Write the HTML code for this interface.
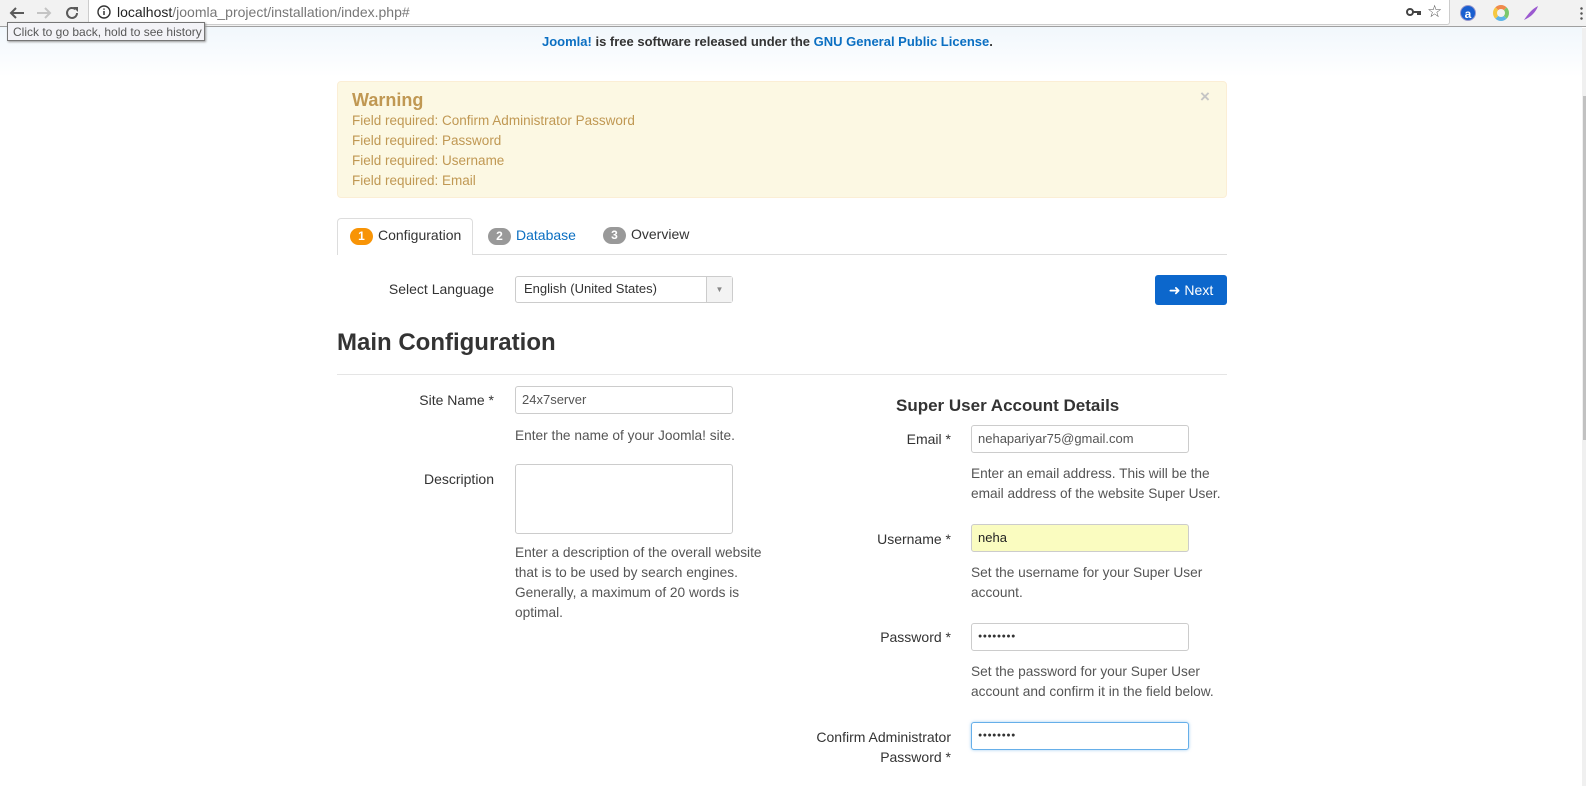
<!DOCTYPE html>
<html><head><style>
*{margin:0;padding:0;box-sizing:border-box}
body{width:1586px;height:786px;overflow:hidden;font-family:"Liberation Sans",Arial,sans-serif;font-size:13px;color:#333;background:#fff;position:relative}
.a{position:absolute;white-space:nowrap}
.bg{position:absolute;left:0;top:27px;width:1582px;height:50px;background:linear-gradient(#f1f7fc,#fff)}
.chrome{position:absolute;left:0;top:0;width:1586px;height:27px;background:#f2f2f2;border-bottom:1px solid #a0a0a0}
.url{position:absolute;left:88px;top:0;width:1362px;height:25px;background:#fff;border:1px solid #ccc;border-top:none;border-radius:0 0 3px 3px}
.tip{position:absolute;left:7px;top:22px;width:198px;height:19px;background:#f3f3f7;border:1px solid #767676;box-shadow:1px 1px 2px #999;font-size:12px;color:#575757;padding:2px 0 0 5px}
.warn{position:absolute;left:337px;top:81px;width:890px;height:117px;background:#fcf8e3;border:1px solid #fbeed5;border-radius:4px;color:#c09853}
.inp{position:absolute;background:#fff;border:1px solid #ccc;border-radius:3px;height:28px;padding:5px 6px;font-size:13px;color:#555}
.lbl{position:absolute;text-align:right;white-space:nowrap}
.help{position:absolute;line-height:20px;color:#555}
.badge{display:inline-block;width:23px;height:17px;border-radius:9px;color:#fff;font-weight:bold;font-size:12px;text-align:center;line-height:17px;vertical-align:middle;margin-right:5px}
.pw{font-size:7px;padding-top:9px;color:#333;letter-spacing:0.5px}
</style></head><body>
<div class="bg"></div>
<div class="chrome">
 <svg class="a" style="left:8px;top:5px" width="18" height="16"><path d="M16 8H3M8 3L3 8l5 5" stroke="#5a5a5a" stroke-width="2" fill="none"/></svg>
 <svg class="a" style="left:35px;top:5px" width="18" height="16"><path d="M2 8h13M10 3l5 5-5 5" stroke="#c4c4c4" stroke-width="2" fill="none"/></svg>
 <svg class="a" style="left:63px;top:4px" width="18" height="18"><path d="M14 9a5 5 0 1 1-1.6-3.7" stroke="#5a5a5a" stroke-width="2" fill="none"/><path d="M10 3h5v5z" fill="#5a5a5a"/></svg>
 <div class="url">
  <svg class="a" style="left:8px;top:5px" width="14" height="14"><circle cx="7" cy="7" r="6" stroke="#333" stroke-width="1.4" fill="none"/><path d="M7 6v4M7 3.5v1.2" stroke="#333" stroke-width="1.5"/></svg>
  <div class="a" style="left:28px;top:4px;font-size:14px;color:#222">localhost<span style="color:#777">/joomla_project/installation/index.php#</span></div>
  <svg class="a" style="left:1317px;top:7px" width="16" height="10"><circle cx="4" cy="5" r="3" stroke="#444" stroke-width="2" fill="none"/><path d="M7 5h8M12 5v3M14 5v3" stroke="#444" stroke-width="2"/></svg>
  <div class="a" style="left:1338px;top:2px;font-size:17px;color:#555">☆</div>
 </div>
 <div class="a" style="left:1460px;top:5px;width:16px;height:16px;border-radius:50%;background:#1a5fd0;color:#fff;font-weight:bold;font-size:12px;text-align:center;line-height:16px;border:1px solid #99c">a</div>
 <div class="a" style="left:1493px;top:5px;width:16px;height:16px;border-radius:50%;border:4px solid;border-color:#f08a4b #7bc86c #5db4e8 #f5c842"></div>
 <svg class="a" style="left:1522px;top:4px" width="18" height="18"><path d="M2 16C6 10 10 5 16 2 14 8 9 13 2 16z" fill="#9b59d0"/></svg>
 <div class="a" style="left:1580px;top:6px;width:3px;height:14px;background:radial-gradient(circle,#555 1px,transparent 1.5px) 0 0/3px 5px"></div>
</div>
<div class="tip">Click to go back, hold to see history</div>
<div class="a" style="left:1582px;top:28px;width:4px;height:758px;background:#f0f0f0"></div>
<div class="a" style="left:1583px;top:96px;width:3px;height:344px;background:#c1c1c1"></div>

<div class="a" style="left:542px;top:34px;font-weight:bold;font-size:13px"><span style="color:#0b6fc2">Joomla!</span> is free software released under the <span style="color:#0b6fc2">GNU General Public License</span>.</div>

<div class="warn">
 <div class="a" style="left:14px;top:8px;font-size:18px;font-weight:bold">Warning</div>
 <div class="a" style="left:14px;top:29px;line-height:20px;font-size:13.5px">Field required: Confirm Administrator Password<br>Field required: Password<br>Field required: Username<br>Field required: Email</div>
 <div class="a" style="left:862px;top:5px;font-size:17px;font-weight:bold;color:#c5c5c5">×</div>
</div>

<div class="a" style="left:337px;top:254px;width:890px;height:1px;background:#ddd"></div>
<div class="a" style="left:337px;top:218px;width:136px;height:37px;background:#fff;border:1px solid #ddd;border-bottom:none;border-radius:4px 4px 0 0"></div>
<div class="a" style="left:350px;top:227px;font-size:14px"><span class="badge" style="background:#f89406">1</span>Configuration</div>
<div class="a" style="left:488px;top:227px;font-size:14px;color:#0b6fc2"><span class="badge" style="background:#999">2</span>Database</div>
<div class="a" style="left:603px;top:226px;font-size:14px"><span class="badge" style="background:#999">3</span>Overview</div>

<div class="lbl" style="right:1092px;top:281px;font-size:14px">Select Language</div>
<div class="inp" style="left:515px;top:276px;width:218px;height:27px;padding:4px 8px;color:#333">English (United States)
 <div class="a" style="left:190px;top:0;width:26px;height:25px;border-left:1px solid #ccc;background:#f3f3f3;font-size:8px;color:#888;text-align:center;line-height:25px">▼</div></div>
<div class="a" style="left:1155px;top:275px;width:72px;height:30px;background:#0c67cc;border-radius:3px;color:#fff;font-size:14px;line-height:30px;text-align:center">➜ Next</div>

<div class="a" style="left:337px;top:329px;font-size:24px;font-weight:bold;color:#333">Main Configuration</div>
<div class="a" style="left:337px;top:374px;width:890px;height:1px;background:#e5e5e5"></div>

<div class="lbl" style="right:1092px;top:392px;font-size:14px">Site Name *</div>
<div class="inp" style="left:515px;top:386px;width:218px">24x7server</div>
<div class="help" style="left:515px;top:426px;font-size:13.7px">Enter the name of your Joomla! site.</div>
<div class="lbl" style="right:1092px;top:471px;font-size:14px">Description</div>
<div class="inp" style="left:515px;top:464px;width:218px;height:70px"></div>
<div class="help" style="left:515px;top:543px;font-size:13.7px">Enter a description of the overall website<br>that is to be used by search engines.<br>Generally, a maximum of 20 words is<br>optimal.</div>

<div class="a" style="left:896px;top:396px;font-size:17px;font-weight:bold">Super User Account Details</div>
<div class="lbl" style="right:635px;top:431px;font-size:14px">Email *</div>
<div class="inp" style="left:971px;top:425px;width:218px">nehapariyar75@gmail.com</div>
<div class="help" style="left:971px;top:464px;font-size:13.7px">Enter an email address. This will be the<br>email address of the website Super User.</div>
<div class="lbl" style="right:635px;top:531px;font-size:14px">Username *</div>
<div class="inp" style="left:971px;top:524px;width:218px;background:#fafcc0;color:#222">neha</div>
<div class="help" style="left:971px;top:563px;font-size:13.7px">Set the username for your Super User<br>account.</div>
<div class="lbl" style="right:635px;top:629px;font-size:14px">Password *</div>
<div class="inp pw" style="left:971px;top:623px;width:218px">●●●●●●●●</div>
<div class="help" style="left:971px;top:662px;font-size:13.7px">Set the password for your Super User<br>account and confirm it in the field below.</div>
<div class="lbl" style="right:635px;top:727px;font-size:14px;line-height:20px">Confirm Administrator<br>Password *</div>
<div class="inp pw" style="left:971px;top:722px;width:218px;border-color:#66afe9;box-shadow:0 0 3px rgba(102,175,233,.6)">●●●●●●●●</div>
</body></html>
